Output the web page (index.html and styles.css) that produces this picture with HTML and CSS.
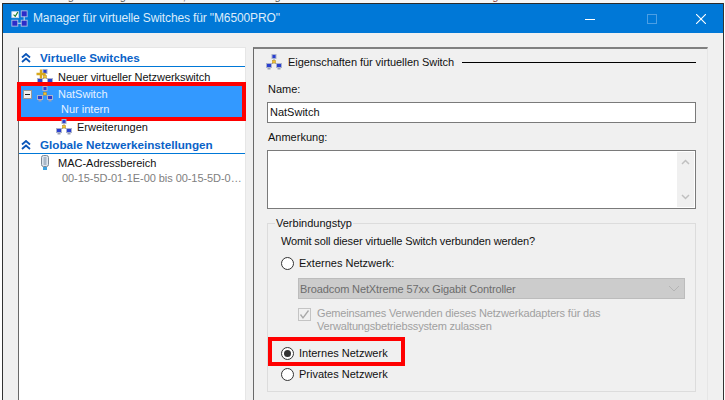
FILE: index.html
```html
<!DOCTYPE html>
<html lang="de">
<head>
<meta charset="utf-8">
<title>Manager für virtuelle Switches</title>
<link rel="stylesheet" href="styles.css">
</head>
<body>
<svg class="defs" width="0" height="0">
  <symbol id="net" viewBox="0 0 16 16">
    <path d="M8 5v4M3.500 11 8 8.500l4.500 2.500" fill="none" stroke="#9a9a9a" stroke-width="1"/>
    <rect x="6" y="0.500" width="4" height="4" fill="#2a3fd0" stroke="#a9b2cc"/>
    <rect x="6.500" y="6.500" width="3" height="2.500" fill="#f2c230" stroke="#b98d18" stroke-width=".5"/>
    <rect x="0.500" y="9.500" width="5" height="4" fill="#2a3fd0" stroke="#a9b2cc"/>
    <rect x="10.500" y="9.500" width="5" height="4" fill="#2a3fd0" stroke="#a9b2cc"/>
    <rect x="1.500" y="14" width="3" height="1.500" fill="#9aa0b5"/>
    <rect x="11.500" y="14" width="3" height="1.500" fill="#9aa0b5"/>
  </symbol>
</svg>
<div class="strip"><span>Einstellungen im Blog verwenden, um die Verbindung</span><span class="strip-r">Broadcom Controller Einstellung</span></div>
<div class="window">
  <header class="titlebar">
    <svg class="title-icon" width="17" height="17" viewBox="0 0 20 20">
      <rect x="1" y="2" width="8" height="7" fill="#fff" stroke="#c8d4e8"/>
      <path d="M3 5.500 5 7.500l3-5" fill="none" stroke="#1a7a30" stroke-width="1.300"/>
      <rect x="12" y="1" width="7" height="7" fill="#2c2cc8" stroke="#b8c4e8"/>
      <rect x="1" y="12" width="7" height="7" fill="#2c2cc8" stroke="#b8c4e8"/>
      <rect x="12" y="12" width="7" height="7" fill="#2c2cc8" stroke="#b8c4e8"/>
      <path d="M15.500 8v4M8 15.500h4" stroke="#d8e0ee" stroke-width="1.200"/>
    </svg>
    <span class="title-text">Manager für virtuelle Switches für "M6500PRO"</span>
    <div class="controls">
      <svg class="ctl" width="10" height="10" viewBox="0 0 10 10"><path d="M0 5.500h10" stroke="#fff"/></svg>
      <svg class="ctl ctl-max" width="10" height="10" viewBox="0 0 10 10"><rect x=".5" y=".5" width="9" height="9" fill="none" stroke="#4c9fe4"/></svg>
      <svg class="ctl" width="10" height="10" viewBox="0 0 10 10"><path d="M0 0l10 10M10 0 0 10" stroke="#fff" stroke-width="1.100"/></svg>
    </div>
  </header>
  <main class="content">
    <nav class="tree">
      <div class="tree-head">
        <svg class="chev" width="10" height="10" viewBox="0 0 10 10"><path d="M1 4.500 5 1l4 3.500M1 9 5 5.500 9 9" fill="none" stroke="#0a55b8" stroke-width="1.800"/></svg>
        <span>Virtuelle Switches</span>
      </div>
      <div class="tree-row new-row">
        <svg class="ic" width="16" height="16"><use href="#net"/></svg>
        <svg class="plus" width="10" height="10" viewBox="0 0 10 10"><path d="M5 0.500v9M0.500 5h9" stroke="#d8a81c" stroke-width="2.400"/></svg>
        <span>Neuer virtueller Netzwerkswitch</span>
      </div>
      <div class="selected">
        <div class="sel-line">
          <span class="minus"></span>
          <svg class="ic" width="16" height="16"><use href="#net"/></svg>
          <span>NatSwitch</span>
        </div>
        <div class="sel-sub">Nur intern</div>
        <div class="redbox redbox-tree"></div>
      </div>
      <div class="tree-row ext-row">
        <svg class="ic" width="16" height="16"><use href="#net"/></svg>
        <span>Erweiterungen</span>
      </div>
      <div class="tree-head head-two">
        <svg class="chev" width="10" height="10" viewBox="0 0 10 10"><path d="M1 4.500 5 1l4 3.500M1 9 5 5.500 9 9" fill="none" stroke="#0a55b8" stroke-width="1.800"/></svg>
        <span>Globale Netzwerkeinstellungen</span>
      </div>
      <div class="tree-row mac-row">
        <svg class="ic" width="16" height="16" viewBox="0 0 16 16"><rect x="4.500" y="0.500" width="7" height="11" rx="2" fill="#dfe6ee" stroke="#7c8896"/><rect x="6.500" y="2" width="3" height="8" fill="#aab8c8"/><path d="M6 12h4v3H6z" fill="#3fa2e0"/></svg>
        <span>MAC-Adressbereich</span>
      </div>
      <div class="mac-sub">00-15-5D-01-1E-00 bis 00-15-5D-0…</div>
    </nav>
    <section class="props">
      <div class="props-title">
        <svg class="ic" width="16" height="16"><use href="#net"/></svg>
        <span>Eigenschaften für virtuellen Switch</span>
        <i class="rule"></i>
      </div>
      <div class="label name-label">Name:</div>
      <div class="input">NatSwitch</div>
      <div class="label note-label">Anmerkung:</div>
      <div class="textarea">
        <div class="scroll">
          <svg width="9" height="6" viewBox="0 0 9 6"><path d="M1 5 4.500 1.500 8 5" fill="none" stroke="#c0c0c0" stroke-width="1.500"/></svg>
          <svg width="9" height="6" viewBox="0 0 9 6"><path d="M1 1 4.500 4.500 8 1" fill="none" stroke="#c0c0c0" stroke-width="1.500"/></svg>
        </div>
      </div>
      <fieldset class="group">
        <legend>Verbindungstyp</legend>
        <div class="question">Womit soll dieser virtuelle Switch verbunden werden?</div>
        <div class="radio-row ext"><span class="radio"></span><span>Externes Netzwerk:</span></div>
        <div class="select"><span>Broadcom NetXtreme 57xx Gigabit Controller</span>
          <svg width="12" height="7" viewBox="0 0 12 7"><path d="M1 1l5 5 5-5" fill="none" stroke="#b4b4b4"/></svg>
        </div>
        <div class="check-row">
          <span class="check"><svg width="13" height="13" viewBox="0 0 13 13"><path d="M2.500 6.500 5 10l5.500-7.500" fill="none" stroke="#a8a8a8" stroke-width="1.300"/></svg></span>
          <span class="check-text">Gemeinsames Verwenden dieses Netzwerkadapters für das<br>Verwaltungsbetriebssystem zulassen</span>
        </div>
        <div class="radio-row int"><span class="radio on"></span><span>Internes Netzwerk</span><div class="redbox redbox-int"></div></div>
        <div class="radio-row priv"><span class="radio"></span><span>Privates Netzwerk</span></div>
      </fieldset>
    </section>
  </main>
</div>
</body>
</html>
```
FILE: styles.css
```css
* { box-sizing: border-box; }
html, body { margin: 0; padding: 0; }
body {
  width: 725px; height: 400px; overflow: hidden; background: #fff;
  font: 11px/16px "Liberation Sans", Arial, sans-serif; color: #111;
}
.defs { display: block; height: 0; }
.strip {
  height: 3px; overflow: hidden; display: flex; align-items: flex-end; padding-left: 20px;
  color: #555; background: #f6f6f6;
}
.strip span { flex: none; margin-bottom: -1px; }
.strip-r { margin-left: 60px; color: #8a3a3a; }
.window {
  width: 722px; height: 397px; margin-left: 2px; background: #f0f0f0;
  border-left: 1px solid #333; border-right: 1px solid #333;
}
.titlebar {
  height: 30px; background: #0078d7; color: #dcecfa; display: flex; align-items: center;
  padding-left: 8px; border-top: 1px solid #2a2a2a;
}
.title-icon { flex: none; margin-right: 5px; margin-top: -1px; }
.title-text { font-size: 12px; letter-spacing: -0.130px; margin-top: -2px; }
.controls { margin-left: auto; display: flex; align-items: center; }
.ctl { display: block; margin-right: 17px; }
.ctl-max { margin: 0 39px 0 35px; }
.content { display: flex; padding: 14px 15px 0; gap: 7px; align-items: flex-start; }
.tree {
  width: 228px; height: 360px; flex: none; background: #fff; padding-top: 2px;
  border: 1px solid #e6e6e6; border-left-color: #696969;
}
.tree-head {
  display: flex; align-items: center; padding-left: 2px;
  border-bottom: 1px solid #0078d7; height: 16px; color: #0a62c8; font-weight: 700; font-size: 11.700px;
  box-sizing: content-box;
}
.tree-head span { margin-left: 9px; }
.tree-row { display: flex; align-items: center; height: 16px; position: relative; }
.ic { flex: none; display: block; }
.new-row { margin-top: 2px; padding-left: 18px; }
.new-row span { margin-left: 5px; letter-spacing: -0.060px; }
.plus { position: absolute; left: 17px; top: 0; }
.selected {
  position: relative; height: 31px; margin: 1px 2px 0; background: #3399ff; color: #e6f2ff;
}
.sel-line { display: flex; align-items: center; height: 16px; }
.minus {
  width: 9px; height: 9px; background: #eee; border: 1px solid #999; margin-right: 5px; position: relative;
  flex: none; margin-left: 2px;
}
.minus::after { content: ""; position: absolute; left: 1px; right: 1px; top: 3px; height: 1px; background: #222; }
.sel-line span:last-child { margin-left: 5px; }
.sel-sub { padding-left: 40px; height: 15px; line-height: 15px; }
.redbox { position: absolute; border: 4px solid #f00; pointer-events: none; }
.redbox-tree { left: -4px; right: -3px; top: -4px; bottom: -4px; }
.ext-row { margin-top: 2px; padding-left: 37px; }
.ext-row span { margin-left: 5px; }
.head-two { margin-top: 2px; }
.mac-row { margin-top: 1px; padding-left: 18px; }
.mac-row span { margin-left: 5px; }
.mac-sub { padding-left: 43px; margin-top: -1px; color: #808080; white-space: nowrap; letter-spacing: -0.060px; }
.props {
  width: 455px; height: 360px; flex: none; padding: 5px 11px 0 13px;
  border: 1px solid #e6e6e6; border-left-color: #696969; border-top: 2px solid #808080;
}
.props-title { display: flex; align-items: center; height: 16px; margin-left: -1px; }
.props-title span { margin-left: 6px; letter-spacing: -0.060px; }
.rule { flex: 1; height: 1px; background: #000; margin-left: 8px; }
.label { height: 16px; margin-left: 1px; }
.name-label { margin-top: 11px; }
.note-label { margin-top: 6px; }
.input {
  height: 21px; margin-top: 5px; background: #fff; border: 1px solid #7a7a7a; padding: 1px 2px; line-height: 17px;
}
.textarea {
  height: 59px; margin-top: 5px; background: #fff; border: 1px solid #7a7a7a; display: flex; justify-content: flex-end;
  padding: 1px;
}
.scroll { width: 17px; background: #f0f0f0; display: flex; flex-direction: column; justify-content: space-between; align-items: center; padding: 7px 0; }
.scroll svg { display: block; }
.group {
  margin: 6px 0 0; padding: 0 0 0 13px; height: 177px; border: 1px solid #dcdcdc; min-width: 0;
}
.group legend { padding: 0 1px; margin-left: -6px; line-height: 16px; }
.question { margin-top: 2px; height: 16px; letter-spacing: -0.120px; }
.radio-row { display: flex; align-items: center; height: 16px; position: relative; }
.radio {
  width: 13px; height: 13px; border-radius: 50%; border: 1px solid #333; background: #fff; margin-right: 5px; flex: none; position: relative;
}
.radio.on::after { content: ""; position: absolute; left: 2px; top: 2px; width: 7px; height: 7px; border-radius: 50%; background: #333; }
.ext { margin-top: 6px; }
.select {
  margin: 7px 10px 0 17px; height: 21px; background: #ccc; border: 1px solid #bcbcbc; color: #6d6d6d; letter-spacing: -0.120px;
  display: flex; align-items: center; justify-content: space-between; padding: 0 4px 0 1px;
}
.check-row { display: flex; margin: 9px 0 0 17px; color: #a0a0a0; line-height: 13px; }
.check { width: 13px; height: 13px; border: 1px solid #c4c4c4; flex: none; margin-right: 6px; }
.check svg { display: block; margin: -1px; }
.check-text { margin-top: -1px; letter-spacing: -0.170px; }
.int { margin-top: 12px; }
.priv { margin-top: 5px; }
.redbox-int { left: -13px; width: 137px; top: -8px; height: 29px; }
```
